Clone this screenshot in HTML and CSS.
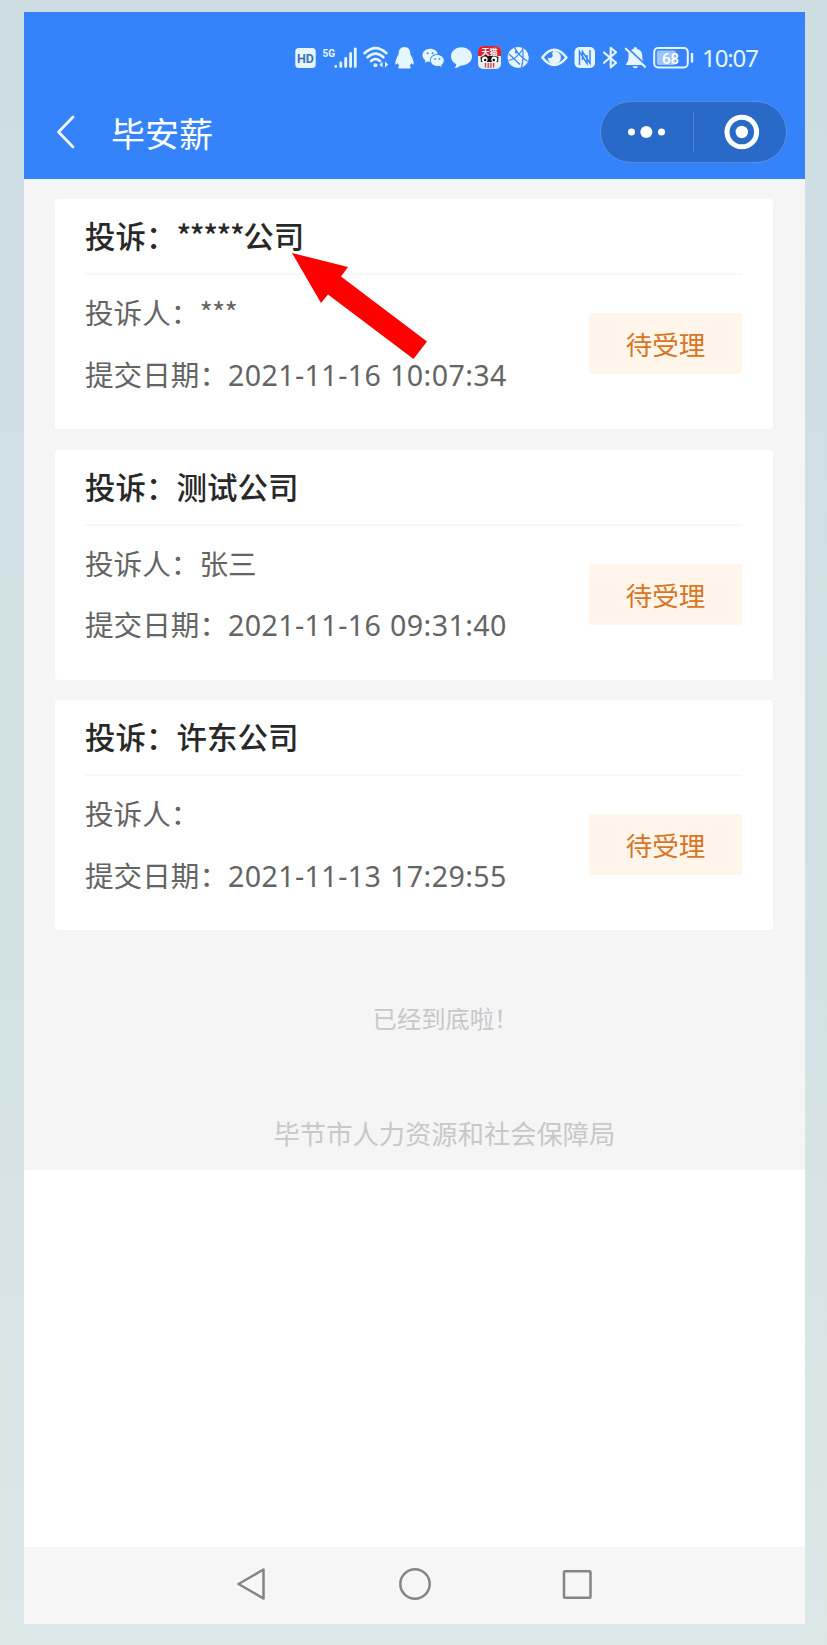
FILE: index.html
```
<!DOCTYPE html>
<html lang="zh-CN">
<head>
  <meta charset="UTF-8" />
  <meta name="viewport" content="width=device-width, initial-scale=1.0" />
  <title>毕安薪</title>
  <link rel="stylesheet" href="styles.css">
</head>
<body>
  <div class="phone">
    <header class="header">
      <div class="status-bar">
        <svg width="21" height="24" viewBox="0 0 21 24">
          <rect x="0.3" y="2" width="20.4" height="20" rx="3.5" fill="#e6f6ff"/>
          <text class="hd" x="10.5" y="17" text-anchor="middle">HD</text>
        </svg>
        <svg width="35" height="24" viewBox="0 0 35 24">
          <text class="net" x="0.5" y="10.5">5G</text>
          <path d="M13.8 20.5v.1M18.8 17v3.6M23.7 12.5v8.1M28.6 7.5v13.1M33.3 2.8v17.8" stroke="#e6f6ff" stroke-width="2.8" stroke-linecap="round"/>
        </svg>
        <svg width="26" height="24" viewBox="0 0 26 24" fill="none" stroke="#e6f6ff" stroke-width="2.6" stroke-linecap="round">
          <path d="M1.5 7.2Q12.500-3 23.5 7.2M4.6 11.3Q12.5 4 20.4 11.3M8 15Q12.5 11 17 15"/>
          <circle cx="12.4" cy="19.3" r="2" fill="#e6f6ff" stroke="none"/>
          <path d="M19.5 15.5v6l-3-3zM22 15.500v6l3.2-3z" fill="#e6f6ff" stroke="none"/>
        </svg>
        <svg width="21" height="24" viewBox="0 0 21 24" fill="#e6f6ff">
          <path d="M9.5 1C5.5 1 3.5 3.8 3.6 8.5 1.5 12 0 15.5.4 18.3c.6.7 1.5-.4 2.2-1.4.4 1.2 1 2 1.8 2.8-1.6.7-1.7 2.9.8 2.9h8.6c2.5 0 2.4-2.2.8-2.9.8-.8 1.4-1.6 1.8-2.8.7 1 1.6 2.1 2.2 1.4.4-2.8-1.1-6.3-3.2-9.8C15.5 3.8 13.5 1 9.5 1z"/>
        </svg>
        <svg width="23" height="24" viewBox="0 0 23 24" fill="#e6f6ff">
          <path d="M8.2 2.8C3.8 2.8.5 5.7.5 9.3c0 2.1 1.1 3.9 2.9 5.1l-.7 2.4 2.8-1.4c.8.3 1.8.4 2.7.4-1-5 3-8 7.6-7.8C15.1 4.9 12 2.8 8.2 2.8z"/>
          <path d="M15.3 9.1c-3.7 0-6.5 2.4-6.5 5.500s2.8 5.500 6.5 5.500c.8 0 1.5-.1 2.2-.3l2.3 1.3-.6-2c1.6-1 2.6-2.7 2.6-4.5 0-3.1-2.9-5.500-6.5-5.500z"/>
          <g fill="#3583fb"><circle cx="5.6" cy="7.2" r="1"/><circle cx="10.6" cy="7.2" r="1"/><circle cx="13.2" cy="12.9" r=".9"/><circle cx="17.5" cy="12.9" r=".9"/></g>
        </svg>
        <svg width="21" height="24" viewBox="0 0 21 24" fill="#e6f6ff">
          <path d="M10.5 1.2C4.6 1.2 0 5.2 0 10.3c0 3.6 2 6.5 5.2 8 .1 1.500-.6 2.6-1.8 3.6 2.5.1 4.5-1 6-2.500 6.6.4 11.6-3.6 11.6-9.1 0-5.1-4.6-9.1-10.5-9.1z"/>
        </svg>
        <svg width="23" height="24" viewBox="0 0 23 24">
          <rect width="23" height="23" rx="5" fill="#e8edf1"/>
          <path d="M0 10V5a5 5 0 0 1 5-5h13a5 5 0 0 1 5 5v5z" fill="#dc2433"/>
          <path d="M2.5 11Q11.5 6 20.5 11L20 16H3z" fill="#201519"/>
          <text class="shop" x="11.5" y="8.5" text-anchor="middle">天猫</text>
          <circle cx="6.7" cy="13.5" r="2.9" fill="#fff"/><circle cx="16.3" cy="13.5" r="2.9" fill="#fff"/>
          <circle cx="7.2" cy="14" r="1.2"/><circle cx="15.8" cy="14" r="1.2"/>
          <path d="M7.5 17v4.5M10.2 17v5M12.9 17v5M15.6 17v4.5" stroke="#d23a45" stroke-width="1.3"/>
        </svg>
        <svg width="28" height="24" viewBox="0 0 28 24" fill="none" stroke="#3583fb" stroke-width="1.2">
          <circle cx="11.2" cy="11.5" r="10.6" fill="#e6f6ff" stroke="none"/>
          <path d="M7.500 1.500Q10 8 20.500 15.500M1.500 14.500Q9 13.500 16 3M15.500 2Q17 11 14.500 21.500M2 8L13 18.500"/>
          <circle cx="9.200" cy="6" r="1.400" fill="#3583fb" stroke="none"/>
        </svg>
        <svg width="27" height="24" viewBox="0 0 27 24">
          <path d="M1.3 11.5Q13.2-4 25.5 11.5 13.2 26.5 1.3 11.5z" fill="none" stroke="#e6f6ff" stroke-width="2.4" stroke-linejoin="round"/>
          <path d="M12.5 5a6.6 6.6 0 1 1-5.8 6.5c2.3 1.6 6.5-.7 4.5-3.6.3-1.2.8-2 1.3-2.9z" fill="#e6f6ff"/>
        </svg>
        <svg width="23" height="24" viewBox="0 0 23 24">
          <rect x=".5" y="1" width="20.5" height="21" rx="5" fill="#e6f6ff"/>
          <path d="M5.5 19V5.5L13 17.500V9M16 4v13.500L8.500 5.500V14" fill="none" stroke="#3583fb" stroke-width="1.5"/>
        </svg>
        <svg width="16" height="24" viewBox="0 0 16 24">
          <path d="M1 6.5L13 16.8 7.7 21.5V1.8L13 6.3 1 16.8" fill="none" stroke="#e6f6ff" stroke-width="2.1" stroke-linejoin="round" stroke-linecap="round"/>
        </svg>
        <svg width="22" height="24" viewBox="0 0 22 24">
          <path d="M8.500 3Q8.500 1 10.3 1t1.800 2c4 1 5.200 3.500 5.200 7.500 0 4 .7 5.500 2.400 7.500v1H1v-1c1.800-2 2.500-3.500 2.500-7.500 0-4 1-6.500 5-7.500z" fill="#e6f6ff"/>
          <path d="M7.5 20.3h5.6q-.5 2-2.8 2t-2.8-2z" fill="#e6f6ff"/>
          <path d="M1.8 1.5L21.5 20" stroke="#3583fb" stroke-width="2.2"/>
          <path d="M.8 2.7L20 20.8" stroke="#e6f6ff" stroke-width="2.1" stroke-linecap="round"/>
        </svg>
        <svg width="43" height="24" viewBox="0 0 43 24">
          <rect x="1.2" y="2" width="33.6" height="19.5" rx="4" fill="none" stroke="#e6f6ff" stroke-width="2"/>
          <rect x="3.8" y="4.5" width="19" height="14.5" rx="2" fill="#9bc4fb"/>
          <path d="M39 7v9.500" stroke="#e6f6ff" stroke-width="2.4"/>
          <text class="battery" x="17.6" y="17.5" text-anchor="middle">68</text>
        </svg>
        <span class="time">10:07</span>
      </div>
      <div class="nav-bar">
        <svg width="20" height="36" viewBox="0 0 20 36">
          <path d="M18 3L3.5 18 18 33" fill="none" stroke="#fff" stroke-width="2.6" stroke-linecap="round" stroke-linejoin="round"/>
        </svg>
        <h1>毕安薪</h1>
        <div class="capsule">
          <svg width="92" height="60" viewBox="0 0 92 60" fill="#fff">
            <circle cx="30.5" cy="30" r="3.5"/><circle cx="45.3" cy="30" r="6"/><circle cx="60.5" cy="30" r="3.5"/>
          </svg>
          <div class="divider"></div>
          <svg width="92" height="60" viewBox="0 0 92 60" fill="#fff">
            <circle cx="47.8" cy="30" r="14.8" fill="none" stroke="#fff" stroke-width="5"/><circle cx="47.8" cy="30" r="6.2"/>
          </svg>
        </div>
      </div>
    </header>

    <main class="content">
      <section class="card">
        <h2>投诉：<span class="mask">*****</span>公司</h2>
        <div class="card-body">
          <div>
            <p>投诉人：<span class="mask">***</span></p>
            <p>提交日期：<span class="date">2021-11-16 10:07:34</span></p>
          </div>
          <span class="tag">待受理</span>
        </div>
        <svg class="arrow" width="136" height="108" viewBox="0 0 136 108">
          <path d="M0 0L56 14 49 23.5 135 88.5 121.5 106 36 41.5 29 50z" fill="#fe0000"/>
        </svg>
      </section>
      <section class="card">
        <h2>投诉：测试公司</h2>
        <div class="card-body">
          <div>
            <p>投诉人：张三</p>
            <p>提交日期：<span class="date">2021-11-16 09:31:40</span></p>
          </div>
          <span class="tag">待受理</span>
        </div>
      </section>
      <section class="card">
        <h2>投诉：许东公司</h2>
        <div class="card-body">
          <div>
            <p>投诉人：</p>
            <p>提交日期：<span class="date">2021-11-13 17:29:55</span></p>
          </div>
          <span class="tag">待受理</span>
        </div>
      </section>
      <p class="end">已经到底啦！</p>
      <p class="owner">毕节市人力资源和社会保障局</p>
    </main>

    <nav class="system-nav">
      <svg width="32" height="36" viewBox="0 0 32 36"><path d="M27.5 3.5v29L2.5 18z"/></svg>
      <svg width="34" height="36" viewBox="0 0 34 36"><circle cx="17" cy="18" r="14.7"/></svg>
      <svg width="32" height="36" viewBox="0 0 32 36"><rect x="3" y="5.2" width="26.5" height="26.500" rx="1"/></svg>
    </nav>
  </div>
</body>
</html>
```

FILE: styles.css
```
* {
  box-sizing: border-box;
}
body {
  margin: 0;
  padding: 12px 22px 21px 24px;
  height: 1645px;
  background: linear-gradient(#cddde1, #d0e0e3 50%, #dce8e7);
  font-family: "Noto Sans CJK SC", sans-serif;
}
h1, h2, p {
  margin: 0;
  font-weight: normal;
}
svg {
  flex: none;
  overflow: visible;
}
.phone {
  display: flex;
  flex-direction: column;
  height: 1612px;
  background: #fff;
}

.header {
  height: 167px;
  padding-top: 34px;
  background: #3583fb;
}
.status-bar {
  display: flex;
  gap: 6px;
  height: 24px;
  padding-left: 271px;
}
.hd {
  font: bold 12.5px Roboto, sans-serif;
  fill: #3d70b5;
}
.net {
  font: bold 10px Roboto, sans-serif;
  fill: #e6f6ff;
}
.shop {
  font: bold 8px "Noto Sans CJK SC", sans-serif;
  fill: #fff;
}
.battery {
  font: 500 15px Roboto, sans-serif;
  fill: #fff;
}
.time {
  color: #e6f6ff;
  font-family: "Noto Sans", sans-serif;
  font-size: 24px;
  line-height: 23px;
  letter-spacing: -1.1px;
}
.nav-bar {
  display: flex;
  align-items: center;
  height: 62px;
  margin-top: 31px;
  padding: 0 18px 0 31px;
}
.nav-bar h1 {
  margin-left: 36px;
  padding-top: 1px;
  color: #fff;
  font-size: 34px;
  line-height: 50px;
}
.capsule {
  display: flex;
  align-items: center;
  width: 187px;
  height: 62px;
  margin-left: auto;
  border: 1px solid #5590e2;
  border-radius: 31px;
  background: #2969c7;
}
.divider {
  width: 1px;
  height: 40px;
  background: #4b83d6;
}

.content {
  height: 991px;
  padding: 20px 32px 0 31px;
  background: #f5f5f6;
}
.card {
  position: relative;
  height: 230px;
  margin-bottom: 20.5px;
  padding: 0 31px 0 30px;
  border-radius: 4px;
  background: #fff;
}
.card h2 {
  height: 76px;
  border-bottom: 2px solid #f8f8f8;
  color: #282828;
  font-size: 30.5px;
  font-weight: 500;
  line-height: 72px;
}
.card-body {
  display: flex;
  align-items: flex-start;
  justify-content: space-between;
  padding-top: 6px;
}
.card-body p {
  color: #646464;
  font-size: 28.6px;
  line-height: 61.5px;
  white-space: nowrap;
}
.mask {
  letter-spacing: -1.4px;
}
.card-body .mask {
  letter-spacing: -0.8px;
}
.date {
  font-family: "Noto Sans", sans-serif;
  letter-spacing: 0.4px;
  word-spacing: 1px;
}
.tag {
  width: 153px;
  height: 61px;
  margin-top: 32px;
  border-radius: 3px;
  background: #fff5eb;
  color: #d87422;
  font-size: 26.5px;
  line-height: 61px;
  text-align: center;
}
/* pointer drawn over the first card */
.arrow {
  position: absolute;
  left: 237px;
  top: 54px;
}
.end, .owner {
  color: #c8c8c8;
  text-align: center;
  white-space: nowrap;
}
.end {
  margin-top: 68px;
  padding-left: 63px;
  font-size: 24.3px;
  line-height: 40px;
}
.owner {
  margin-top: 75px;
  padding-left: 61px;
  font-size: 26.3px;
  line-height: 40px;
}

.system-nav {
  display: flex;
  align-items: center;
  justify-content: space-between;
  height: 77px;
  margin-top: auto;
  padding: 0 212px 3px;
  background: #f6f6f7;
}
.system-nav svg {
  fill: none;
  stroke: #858585;
  stroke-width: 2.5;
  stroke-linejoin: round;
}
```
